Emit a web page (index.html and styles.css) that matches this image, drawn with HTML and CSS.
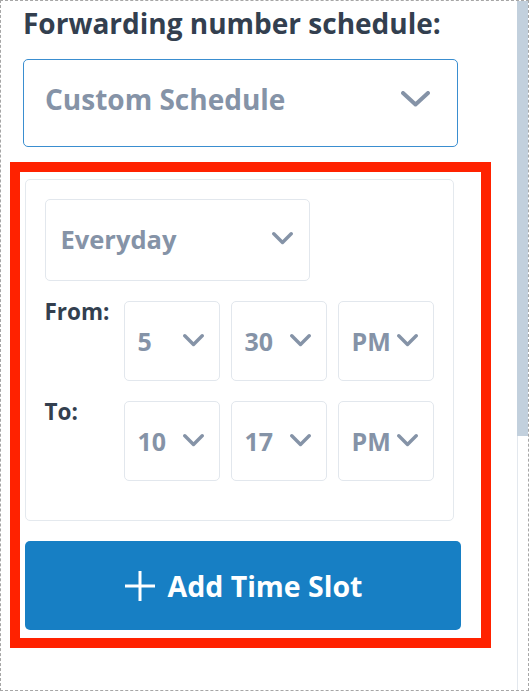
FILE: index.html
```html
<!DOCTYPE html>
<html lang="en">
<head>
<meta charset="utf-8">
<title>Forwarding number schedule</title>
<link rel="stylesheet" href="styles.css">
</head>
<body>
<div class="frame">
  <main class="content">
    <h2 class="heading">Forwarding number schedule:</h2>
    <div class="select select-main">
      <span class="select-value">Custom Schedule</span>
      <svg class="chev chev-lg" viewBox="0 0 29 16" aria-hidden="true"><path d="M2 2 L14.5 13.5 L27 2"/></svg>
    </div>
    <section class="highlight">
      <div class="card">
        <div class="select select-day">
          <span class="select-value">Everyday</span>
          <svg class="chev chev-md" viewBox="0 0 21 13" aria-hidden="true"><path d="M1.8 1.8 L10.5 10.5 L19.2 1.8"/></svg>
        </div>
        <div class="time-row">
          <span class="time-label">From:</span>
          <div class="select select-sm"><span class="select-value">5</span><svg class="chev chev-sm" viewBox="0 0 21 13" aria-hidden="true"><path d="M1.8 1.8 L10.5 10.5 L19.2 1.8"/></svg></div>
          <div class="select select-sm"><span class="select-value">30</span><svg class="chev chev-sm" viewBox="0 0 21 13" aria-hidden="true"><path d="M1.8 1.8 L10.5 10.5 L19.2 1.8"/></svg></div>
          <div class="select select-sm"><span class="select-value">PM</span><svg class="chev chev-sm" viewBox="0 0 21 13" aria-hidden="true"><path d="M1.8 1.8 L10.5 10.5 L19.2 1.8"/></svg></div>
        </div>
        <div class="time-row">
          <span class="time-label">To:</span>
          <div class="select select-sm"><span class="select-value">10</span><svg class="chev chev-sm" viewBox="0 0 21 13" aria-hidden="true"><path d="M1.8 1.8 L10.5 10.5 L19.2 1.8"/></svg></div>
          <div class="select select-sm"><span class="select-value">17</span><svg class="chev chev-sm" viewBox="0 0 21 13" aria-hidden="true"><path d="M1.8 1.8 L10.5 10.5 L19.2 1.8"/></svg></div>
          <div class="select select-sm"><span class="select-value">PM</span><svg class="chev chev-sm" viewBox="0 0 21 13" aria-hidden="true"><path d="M1.8 1.8 L10.5 10.5 L19.2 1.8"/></svg></div>
        </div>
      </div>
      <button class="add-btn" type="button">
        <svg class="plus" viewBox="0 0 32 32" aria-hidden="true"><path d="M16 1 V31 M1 16 H31"/></svg>
        <span>Add Time Slot</span>
      </button>
    </section>
  </main>
  <div class="scrollbar"><div class="thumb"></div><div class="track"></div></div>
</div>
</body>
</html>
```

FILE: styles.css
```css
* { box-sizing: border-box; }
html, body { margin: 0; padding: 0; background: #ffffff; }
body { font-family: "Open Sans", "Liberation Sans", sans-serif; font-weight: 700; }

.frame {
  width: 529px;
  height: 691px;
  border: 1px dashed #a6a6a6;
  display: flex;
  overflow: hidden;
}

.content { flex: 1; min-width: 0; }

.heading {
  margin: 4px 0 0 22px;
  font-size: 28px;
  line-height: 36px;
  font-weight: 700;
  color: #333f4f;
  white-space: nowrap;
}

.select {
  display: flex;
  align-items: center;
  justify-content: space-between;
  background: #fff;
  border: 1.5px solid #e2e7ed;
  border-radius: 5px;
  color: #8593a7;
}
.select-value { white-space: nowrap; }

.chev { display: block; flex: none; }
.chev path { fill: none; stroke: #8593a7; stroke-linecap: round; stroke-linejoin: round; }
.chev-lg { width: 29px; height: 16px; }
.chev-lg path { stroke-width: 4; }
.chev-md, .chev-sm { width: 21px; height: 13px; }
.chev-md path, .chev-sm path { stroke-width: 3.4; }

.select-main {
  margin: 18px 0 0 22px;
  width: 435px;
  height: 88px;
  border-color: #3a8ed0;
  padding: 0 27px 8px 21px;
  font-size: 28px;
}

.highlight {
  margin: 15px 0 0 9px;
  width: 481px;
  height: 486px;
  border: 10px solid #ff2200;
  padding: 7px 0 0 5px;
}

.card {
  width: 429px;
  height: 342px;
  border: 1.5px solid #e4e9ee;
  border-radius: 5px;
  padding: 18.5px 18.5px;
  display: flex;
  flex-direction: column;
  gap: 20px;
}

.select-day {
  width: 265px;
  height: 82px;
  padding: 0 16px 2px 15px;
  font-size: 25.5px;
}

.time-row {
  display: grid;
  grid-template-columns: 68px 96px 96px 96px;
  column-gap: 11px;
  align-items: start;
}

.time-label {
  font-size: 22.5px;
  line-height: 24px;
  color: #333f4f;
  margin-top: -1px;
}

.select-sm {
  height: 80px;
  padding: 0 15px 0 13px;
  font-size: 25px;
}

.add-btn {
  margin-top: 20px;
  width: 436px;
  height: 89px;
  border: none;
  border-radius: 5px;
  background: #177fc4;
  color: #ffffff;
  font-family: inherit;
  font-weight: 700;
  font-size: 28.5px;
  display: flex;
  align-items: center;
  justify-content: center;
  gap: 12px;
  padding: 0;
}
.plus { width: 32px; height: 32px; display: block; }
.plus path { stroke: #ffffff; stroke-width: 3; fill: none; }

.scrollbar {
  width: 11px;
  flex: none;
  display: flex;
  flex-direction: column;
}
.thumb { height: 435px; background: #c2d0dd; }
.track { flex: 1; border-left: 1px solid #e3e8ee; background: #fff; }
```
